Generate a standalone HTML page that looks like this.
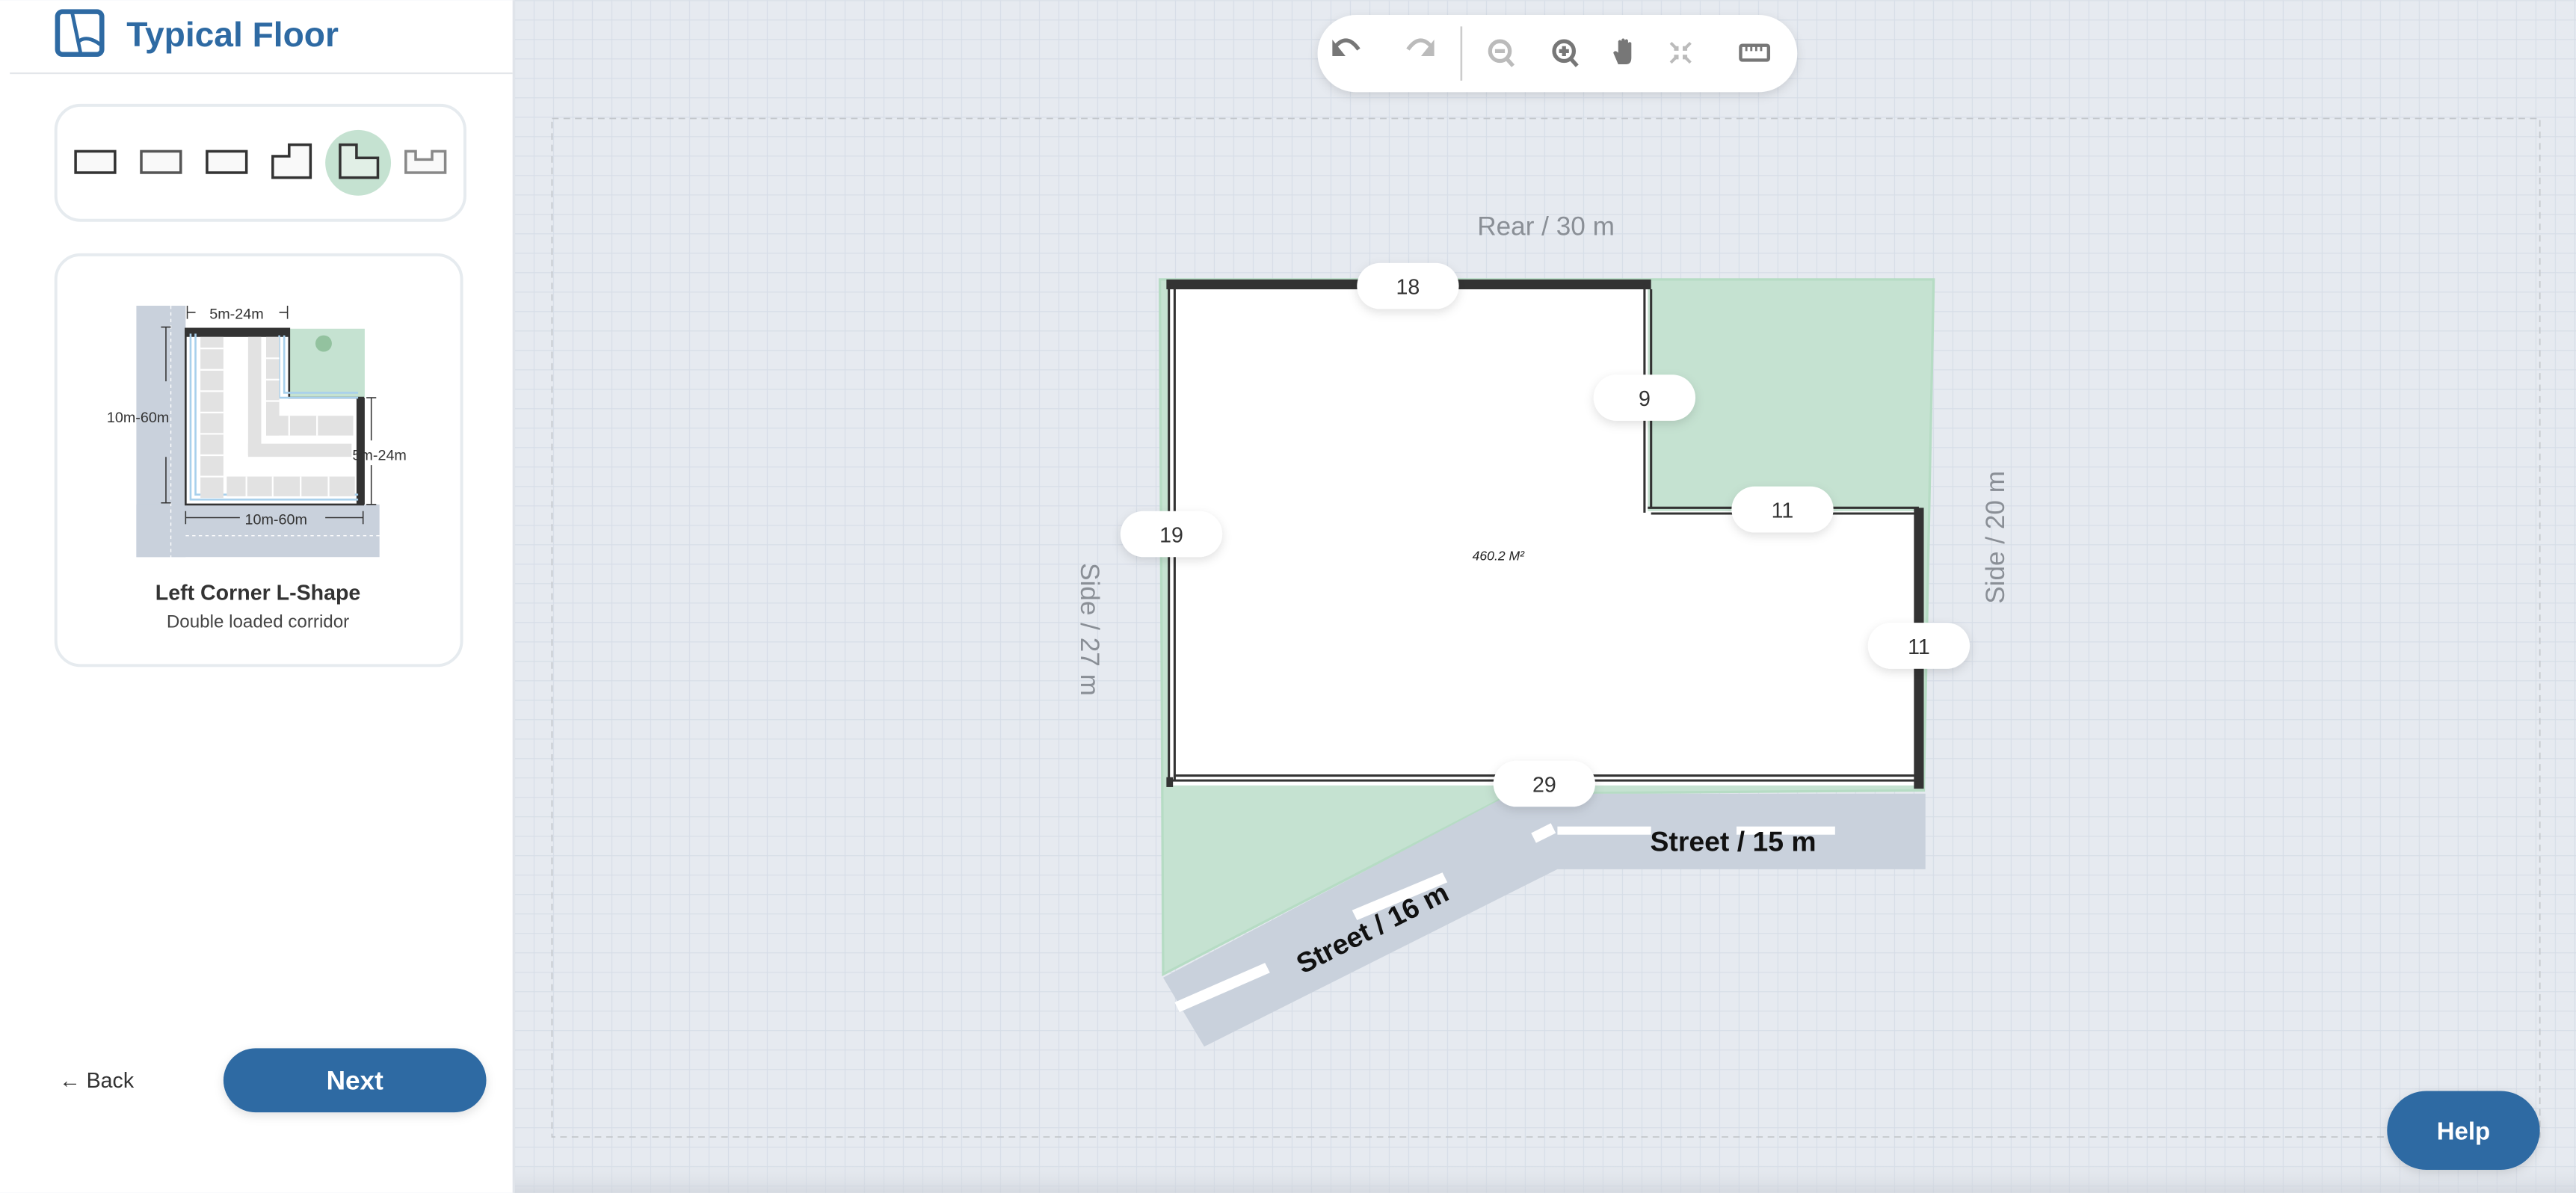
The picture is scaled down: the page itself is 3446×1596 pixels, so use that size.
<!DOCTYPE html>
<html><head><meta charset="utf-8"><style>
html,body{margin:0;padding:0;width:3446px;height:1596px;overflow:hidden;background:#e6eaf0}
svg{display:block}
text{font-family:"Liberation Sans",sans-serif}
</style></head><body>
<svg width="3446" height="1596" viewBox="0 0 1568 726" xmlns="http://www.w3.org/2000/svg">
<defs>
<pattern id="g" width="11.83" height="11.83" patternUnits="userSpaceOnUse" x="313" y="0">
<rect width="11.83" height="11.83" fill="#e6eaf0"/>
<path d="M0 0H11.83M0 0V11.83" stroke="#d6dde7" stroke-width="1"/>
</pattern>
<filter id="sh" x="-30%" y="-50%" width="160%" height="220%"><feDropShadow dx="0" dy="2" stdDeviation="3" flood-color="#000" flood-opacity="0.12"/></filter>
<linearGradient id="bot" x1="0" y1="0" x2="0" y2="1"><stop offset="0" stop-color="#e6eaf0" stop-opacity="0"/><stop offset="1" stop-color="#c9ced6"/></linearGradient>
</defs>
<rect x="313" y="0" width="1255" height="726" fill="url(#g)"/>
<rect x="313" y="705" width="1255" height="21" fill="url(#bot)" opacity="0.6"/>
<rect x="336" y="72" width="1210" height="620" fill="none" stroke="#c3c7cc" stroke-width="0.8" stroke-dasharray="4 3"/>

<!-- lot -->
<polygon points="706,170 1177,170 1171,481 920,483 708,593" fill="#c5e2d1" stroke="#b6dcc4" stroke-width="1.5"/>
<polygon points="708,595 920,483 1172,483 1172,529 948,529 733,637" fill="#c9d1dc"/>
<rect x="948" y="503" width="57" height="5" fill="#fff"/>
<rect x="1057" y="503" width="60" height="5" fill="#fff"/>
<polygon points="932,507 944,501 947,507 935,513" fill="#fff"/>
<polygon points="715,610 770,586 773,592 718,616" fill="#fff"/>
<polygon points="823,554 878,531 881,537 826,560" fill="#fff"/>

<!-- building -->
<polygon points="711,172 1003,172 1003,311 1169,311 1169,478 711,478" fill="#fff"/>
<rect x="710" y="170" width="295" height="6" fill="#333"/>
<rect x="1165" y="309" width="6" height="171" fill="#333"/>
<path d="M711.5 173V478M715 176V474.5M1001 173V312M1005 176V309M1003 309H1168M1005 312.5H1166M711 475H1169M714.5 472H1166" stroke="#333" stroke-width="1.4" fill="none"/>
<rect x="710" y="473" width="4" height="6" fill="#333"/>
<text x="912" y="341" font-size="8" font-style="italic" text-anchor="middle" fill="#222">460.2 M²</text>

<g filter="url(#sh)" fill="#fff">
<rect x="826" y="160" width="62" height="28" rx="14"/>
<rect x="970" y="228" width="62" height="28" rx="14"/>
<rect x="1054" y="296" width="62" height="28" rx="14"/>
<rect x="682" y="311" width="62" height="28" rx="14"/>
<rect x="1137" y="379" width="62" height="28" rx="14"/>
<rect x="909" y="463" width="62" height="28" rx="14"/>
</g>
<g font-size="13" fill="#333" text-anchor="middle">
<text x="857" y="179">18</text><text x="1001" y="247">9</text><text x="1085" y="315">11</text>
<text x="713" y="330">19</text><text x="1168" y="398">11</text><text x="940" y="482">29</text>
</g>
<text x="941" y="143" font-size="16" fill="#8a8f96" text-anchor="middle">Rear / 30 m</text>
<text transform="translate(658,383) rotate(90)" font-size="16" fill="#8a8f96" text-anchor="middle">Side / 27 m</text>
<text transform="translate(1220,327) rotate(-90)" font-size="16" fill="#8a8f96" text-anchor="middle">Side / 20 m</text>
<text x="1055" y="518" font-size="17" font-weight="bold" fill="#111" text-anchor="middle">Street / 15 m</text>
<text transform="translate(838,570) rotate(-27)" font-size="17" font-weight="bold" fill="#111" text-anchor="middle">Street / 16 m</text>

<!-- toolbar -->
<rect x="802" y="9" width="292" height="47" rx="23.5" fill="#fff" filter="url(#sh)"/>
<line x1="889.5" y1="16" x2="889.5" y2="49" stroke="#ccc" stroke-width="1.2"/>
<g fill="none" stroke-width="2.4">
<path d="M813 28 Q820 20 827 30" stroke="#777"/><path d="M811 24V34H819Z" fill="#777" stroke="none"/>
<path d="M871 28 Q864 20 857 30" stroke="#bbb"/><path d="M873 24V34H865Z" fill="#bbb" stroke="none"/>
<circle cx="913" cy="31" r="6" stroke="#bbb"/><path d="M910 31H916M917 35.5L921 40" stroke="#bbb"/>
<circle cx="952" cy="31" r="6" stroke="#777"/><path d="M949 31H955M952 28V34M956 35.5L960 40" stroke="#777"/>
</g>
<path d="M985 39 L982 32 Q983 30 985 32 V25 Q986 23.5 987 25 V24 Q988 22.5 989 24 V24.5 Q990 23 991 24.5 V26 Q992 25 993 26 V35 Q993 39 990 39Z" fill="#777"/>
<path d="M1017 26L1021 30M1029 26L1025 30M1017 38L1021 34M1029 38L1025 34" stroke="#bbb" stroke-width="1.8"/>
<path d="M1019 30H1021V28M1027 30H1025V28M1019 34H1021V36M1027 34H1025V36" stroke="#bbb" stroke-width="1.5" fill="none"/>
<rect x="1059.5" y="27.5" width="17" height="9" rx="1" fill="none" stroke="#777" stroke-width="2"/>
<path d="M1063 28V31M1066 28V31M1069 28V31M1072 28V31" stroke="#777" stroke-width="1.3"/>

<!-- help -->
<rect x="1453" y="664" width="93" height="48" rx="24" fill="#2e6aa3" filter="url(#sh)"/>
<text x="1499.5" y="693.5" font-size="15" font-weight="bold" fill="#fff" text-anchor="middle">Help</text>

<!-- sidebar -->
<rect x="0" y="0" width="313" height="726" fill="#fff"/>
<rect x="312" y="0" width="1.5" height="726" fill="#e0e4ea"/>
<line x1="6" y1="44.5" x2="312" y2="44.5" stroke="#e3e6ea" stroke-width="1"/>
<rect x="35" y="7" width="27" height="26" rx="3" fill="none" stroke="#2e6aa3" stroke-width="3"/>
<path d="M44 8 L49 32 M48 25 Q53 21 61 27" stroke="#2e6aa3" stroke-width="2.2" fill="none"/>
<text x="77" y="28" font-size="21" font-weight="bold" fill="#2e6aa3">Typical Floor</text>

<rect x="34" y="64" width="249" height="70" rx="15" fill="#fff" stroke="#e6ebef" stroke-width="1.8"/>
<circle cx="218" cy="99" r="20" fill="#c5e2d1"/>
<g fill="#f9f9f9" stroke="#333" stroke-width="1.6">
<rect x="46" y="92" width="24" height="13"/>
<rect x="86" y="92" width="24" height="13" stroke="#555"/>
<rect x="126" y="92" width="24" height="13"/>
<path d="M166 95H176V88H189V108H166Z"/>
<path d="M207 88H217V96H230V108H207Z" fill="#e1efe6"/>
<path d="M247 92H253V97H263V92H271V105H247Z" stroke="#888"/>
</g>

<rect x="34" y="155" width="247" height="250" rx="15" fill="#fff" stroke="#e6ebef" stroke-width="1.8"/>
<!-- diagram -->
<rect x="83" y="186" width="30" height="153" fill="#c9d1dc"/>
<rect x="83" y="307" width="148" height="32" fill="#c9d1dc"/>
<path d="M104 186V340M113 326H231" stroke="#fff" stroke-width="0.6" stroke-dasharray="2 2"/>
<rect x="176" y="200" width="46" height="42" fill="#c5e2d1"/>
<circle cx="197" cy="209" r="5" fill="#93c29f"/>
<path d="M113 200H176V242H221V307H113Z" fill="#fff" stroke="#333" stroke-width="1.2"/>
<rect x="113" y="200" width="63" height="5" fill="#333"/>
<rect x="217" y="242" width="5" height="65" fill="#333"/>
<path d="M116 203V304H218M119 203V301H218M173 204V239H218M170 204V242H218" stroke="#a8d0ec" stroke-width="1.2" fill="none"/>
<g fill="#e2e2e2">
<rect x="122" y="205" width="14" height="98"/><rect x="138" y="290" width="78" height="12"/>
<rect x="151" y="205" width="8" height="72"/><rect x="151" y="270" width="63" height="8"/>
<rect x="162" y="205" width="8" height="60"/><rect x="162" y="253" width="53" height="12"/>
</g>
<path d="M122 212H136M122 225H136M122 238H136M122 251H136M122 264H136M122 277H136M122 290H136M150 290V302M166 290V302M183 290V302M200 290V302M176 253V265M193 253V265M162 218H170M162 231H170M162 244H170" stroke="#fff" stroke-width="1"/>
<path d="M101 199V232M101 278V306M98 199H104M98 306H104M113 315H146M198 315H221M113 311V319M221 311V319M114 190H119M170 190H175M114 186V194M175 186V194M226 242V268M226 283V307M223 242H229M223 307H229" stroke="#333" stroke-width="0.7" fill="none"/>
<text x="144" y="194" font-size="9" fill="#333" text-anchor="middle">5m-24m</text>
<text x="84" y="257" font-size="9" fill="#333" text-anchor="middle">10m-60m</text>
<text x="168" y="319" font-size="9" fill="#333" text-anchor="middle">10m-60m</text>
<text x="231" y="280" font-size="9" fill="#333" text-anchor="middle">5m-24m</text>
<text x="157" y="365" font-size="13" font-weight="bold" fill="#333" text-anchor="middle">Left Corner L-Shape</text>
<text x="157" y="382" font-size="11" fill="#444" text-anchor="middle">Double loaded corridor</text>

<text x="36" y="662" font-size="13" fill="#333">← Back</text>
<rect x="136" y="638" width="160" height="39" rx="19.5" fill="#2e6aa3" filter="url(#sh)"/>
<text x="216" y="663" font-size="16" font-weight="bold" fill="#fff" text-anchor="middle">Next</text>
</svg>
</body></html>
